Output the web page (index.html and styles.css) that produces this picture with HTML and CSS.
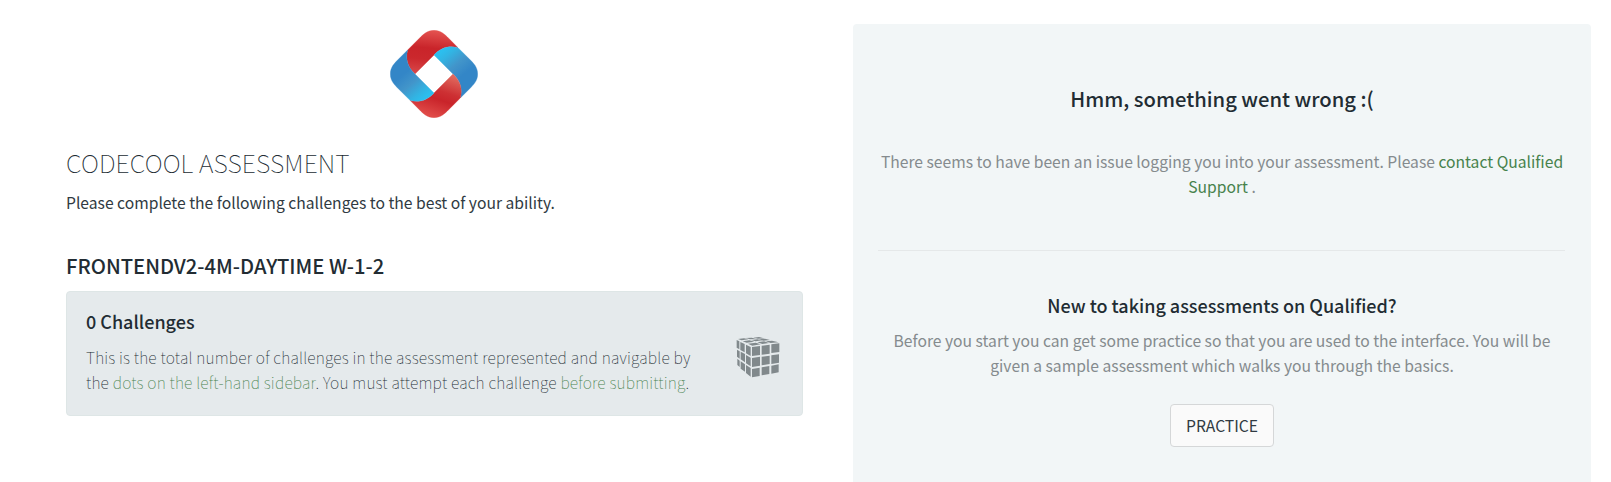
FILE: index.html
```html
<!DOCTYPE html>
<html lang="en">
<head>
<meta charset="utf-8">
<title>Codecool Assessment</title>
<link rel="stylesheet" href="styles.css">
</head>
<body>
<main class="page">
  <section class="intro">
    <svg class="logo" viewBox="30 29 264 264" aria-hidden="true">
      <defs>
        <linearGradient id="redTop" gradientUnits="userSpaceOnUse" x1="162" y1="30" x2="150" y2="165"><stop offset="0" stop-color="#e45350"/><stop offset=".4" stop-color="#c9242a"/><stop offset=".65" stop-color="#cb282d"/><stop offset="1" stop-color="#d9494a"/></linearGradient>
        <linearGradient id="redBottom" gradientUnits="userSpaceOnUse" x1="152" y1="30" x2="110" y2="155"><stop offset="0" stop-color="#e04a48"/><stop offset=".4" stop-color="#c9242a"/><stop offset=".6" stop-color="#cd3033"/><stop offset="1" stop-color="#e0685d"/></linearGradient>
        <linearGradient id="blueSide" gradientUnits="userSpaceOnUse" x1="88" y1="128" x2="160" y2="68"><stop offset="0" stop-color="#2cbeee"/><stop offset=".2" stop-color="#32b4e3"/><stop offset=".6" stop-color="#4295ca"/><stop offset="1" stop-color="#3386c7"/></linearGradient>
        <path id="petal" d="M105 161C82 140 76 115 83 89L118 54C130 42 142 30 162 30S194 42 206 54L234 82C208 75 183 81 162 104Z"/>
      </defs>
      <use href="#petal" fill="url(#redTop)" stroke="url(#redTop)"/>
      <use href="#petal" fill="url(#blueSide)" stroke="url(#blueSide)" transform="rotate(90 162 161)"/>
      <use href="#petal" fill="url(#redBottom)" stroke="url(#redBottom)" transform="rotate(180 162 161)"/>
      <use href="#petal" fill="url(#blueSide)" stroke="url(#blueSide)" transform="rotate(270 162 161)"/>
    </svg>
    <h1 class="title">CODECOOL ASSESSMENT</h1>
    <p class="lead">Please complete the following challenges to the best of your ability.</p>
    <h2 class="subtitle">FRONTENDV2-4M-DAYTIME W-1-2</h2>
    <div class="card">
      <div class="card-body">
        <h3 class="card-title">0 Challenges</h3>
        <p class="card-text">This is the total number of challenges in the assessment represented and navigable by<br>the <em>dots on the left-hand sidebar</em>. You must attempt each challenge <em>before submitting</em>.</p>
      </div>
      <svg class="cube" viewBox="48 48 132 123" aria-hidden="true">
        <path d="M96 78l24-3v27l-24 3zM125 74l24-3v27l-24 3zM154 70l24-3v26l-24 3zM96 111l24-4v27l-24 4zM125 107l24-3v25l-24 4zM154 103l23-3v25l-23 4zM96 144l23-4v25l-23 4zM125 139l23-4v24l-23 4zM154 134l22-4v24l-22 4z"/>
        <path d="M50 57l8 4v24l-8-5zM61 63l13 6v25l-13-7zM78 71l14 7v27l-14-8zM51 86l8 5v22l-8-6zM62 92l13 7v25l-13-9zM78 102l14 8v26l-14-9zM52 113l7 6v19l-7-6zM62 121l13 9v22l-13-9zM78 132l14 9v26l-14-11z"/>
        <path d="M54 54l18-2 13 3-20 3zM77 51l18-1 13 3-18 2zM100 50l17-2 15 4-18 1zM68 61l20-3 15 4-23 3zM93 57l19-2 15 3-20 3zM117 54l18-1 15 4-20 2zM84 68l23-3 15 5-25 4zM112 64l20-3 15 5-20 3zM137 61l19-2 20 5-24 2z"/>
      </svg>
    </div>
  </section>
  <section class="panel">
    <h2 class="error-title">Hmm, something went wrong :(</h2>
    <p class="error-text">There seems to have been an issue logging you into your assessment. Please <a>contact Qualified<br>Support</a> .</p>
    <hr class="rule">
    <h3 class="practice-title">New to taking assessments on Qualified?</h3>
    <p class="practice-text">Before you start you can get some practice so that you are used to the interface. You will be<br>given a sample assessment which walks you through the basics.</p>
    <button class="button" type="button">PRACTICE</button>
  </section>
</main>
</body>
</html>
```
FILE: styles.css
```css
* { box-sizing: border-box; margin: 0; }
body { background: #fff; color: #222c33; font: 400 15.66px/25px "Noto Sans CJK SC", sans-serif; white-space: nowrap; }
.page { display: flex; justify-content: space-between; height: 482px; padding: 24px 20px 0 66px; overflow: hidden; }
h1, h2, h3 { font-weight: 500; }
.intro { width: 737px; }
.logo { display: block; width: 88px; height: 88px; margin: 6px auto 0; position: relative; left: -.5px; }
.title { margin-top: 24px; font-size: 25px; font-weight: 100; line-height: 40px; letter-spacing: .1px; }
.lead { margin-top: 8px; color: #303a42; }
.subtitle { margin-top: 36px; font-size: 20.2px; line-height: 30px; }
.card { display: flex; align-items: flex-start; justify-content: space-between; height: 125px; margin-top: 10px; padding: 15px 22px 0 19px; border: 1px solid #dee6e6; border-radius: 4px; background: #e5eaec; }
.card-title { font-size: 18px; line-height: 28px; }
.card-text { margin-top: 10px; font-weight: 100; letter-spacing: .18px; }
.card-text em { color: #47824c; font-style: normal; }
.cube { width: 44px; height: 41px; margin-top: 29.5px; fill: #81898c; }
.panel { width: 738px; height: 500px; padding: 60px 25px 0; border-radius: 4px 4px 0 0; background: #f2f6f7; text-align: center; }
.error-title { font-size: 20.2px; line-height: 30px; }
.error-text { margin-top: 35px; color: #858b8e; }
.error-text a { color: #47824c; }
.rule { height: 1px; margin: 51px 1px 0 0; border: 0; background: #e5e8e9; }
.practice-title { margin-top: 40px; font-size: 18px; line-height: 28px; }
.practice-text { margin-top: 9px; color: #858b8e; }
.button { width: 104px; height: 43px; margin-top: 26px; padding: 0 0 1px; border: 1px solid #d5d7d8; border-radius: 4px; background: #fafafa; color: #303a42; font: inherit; }
```
